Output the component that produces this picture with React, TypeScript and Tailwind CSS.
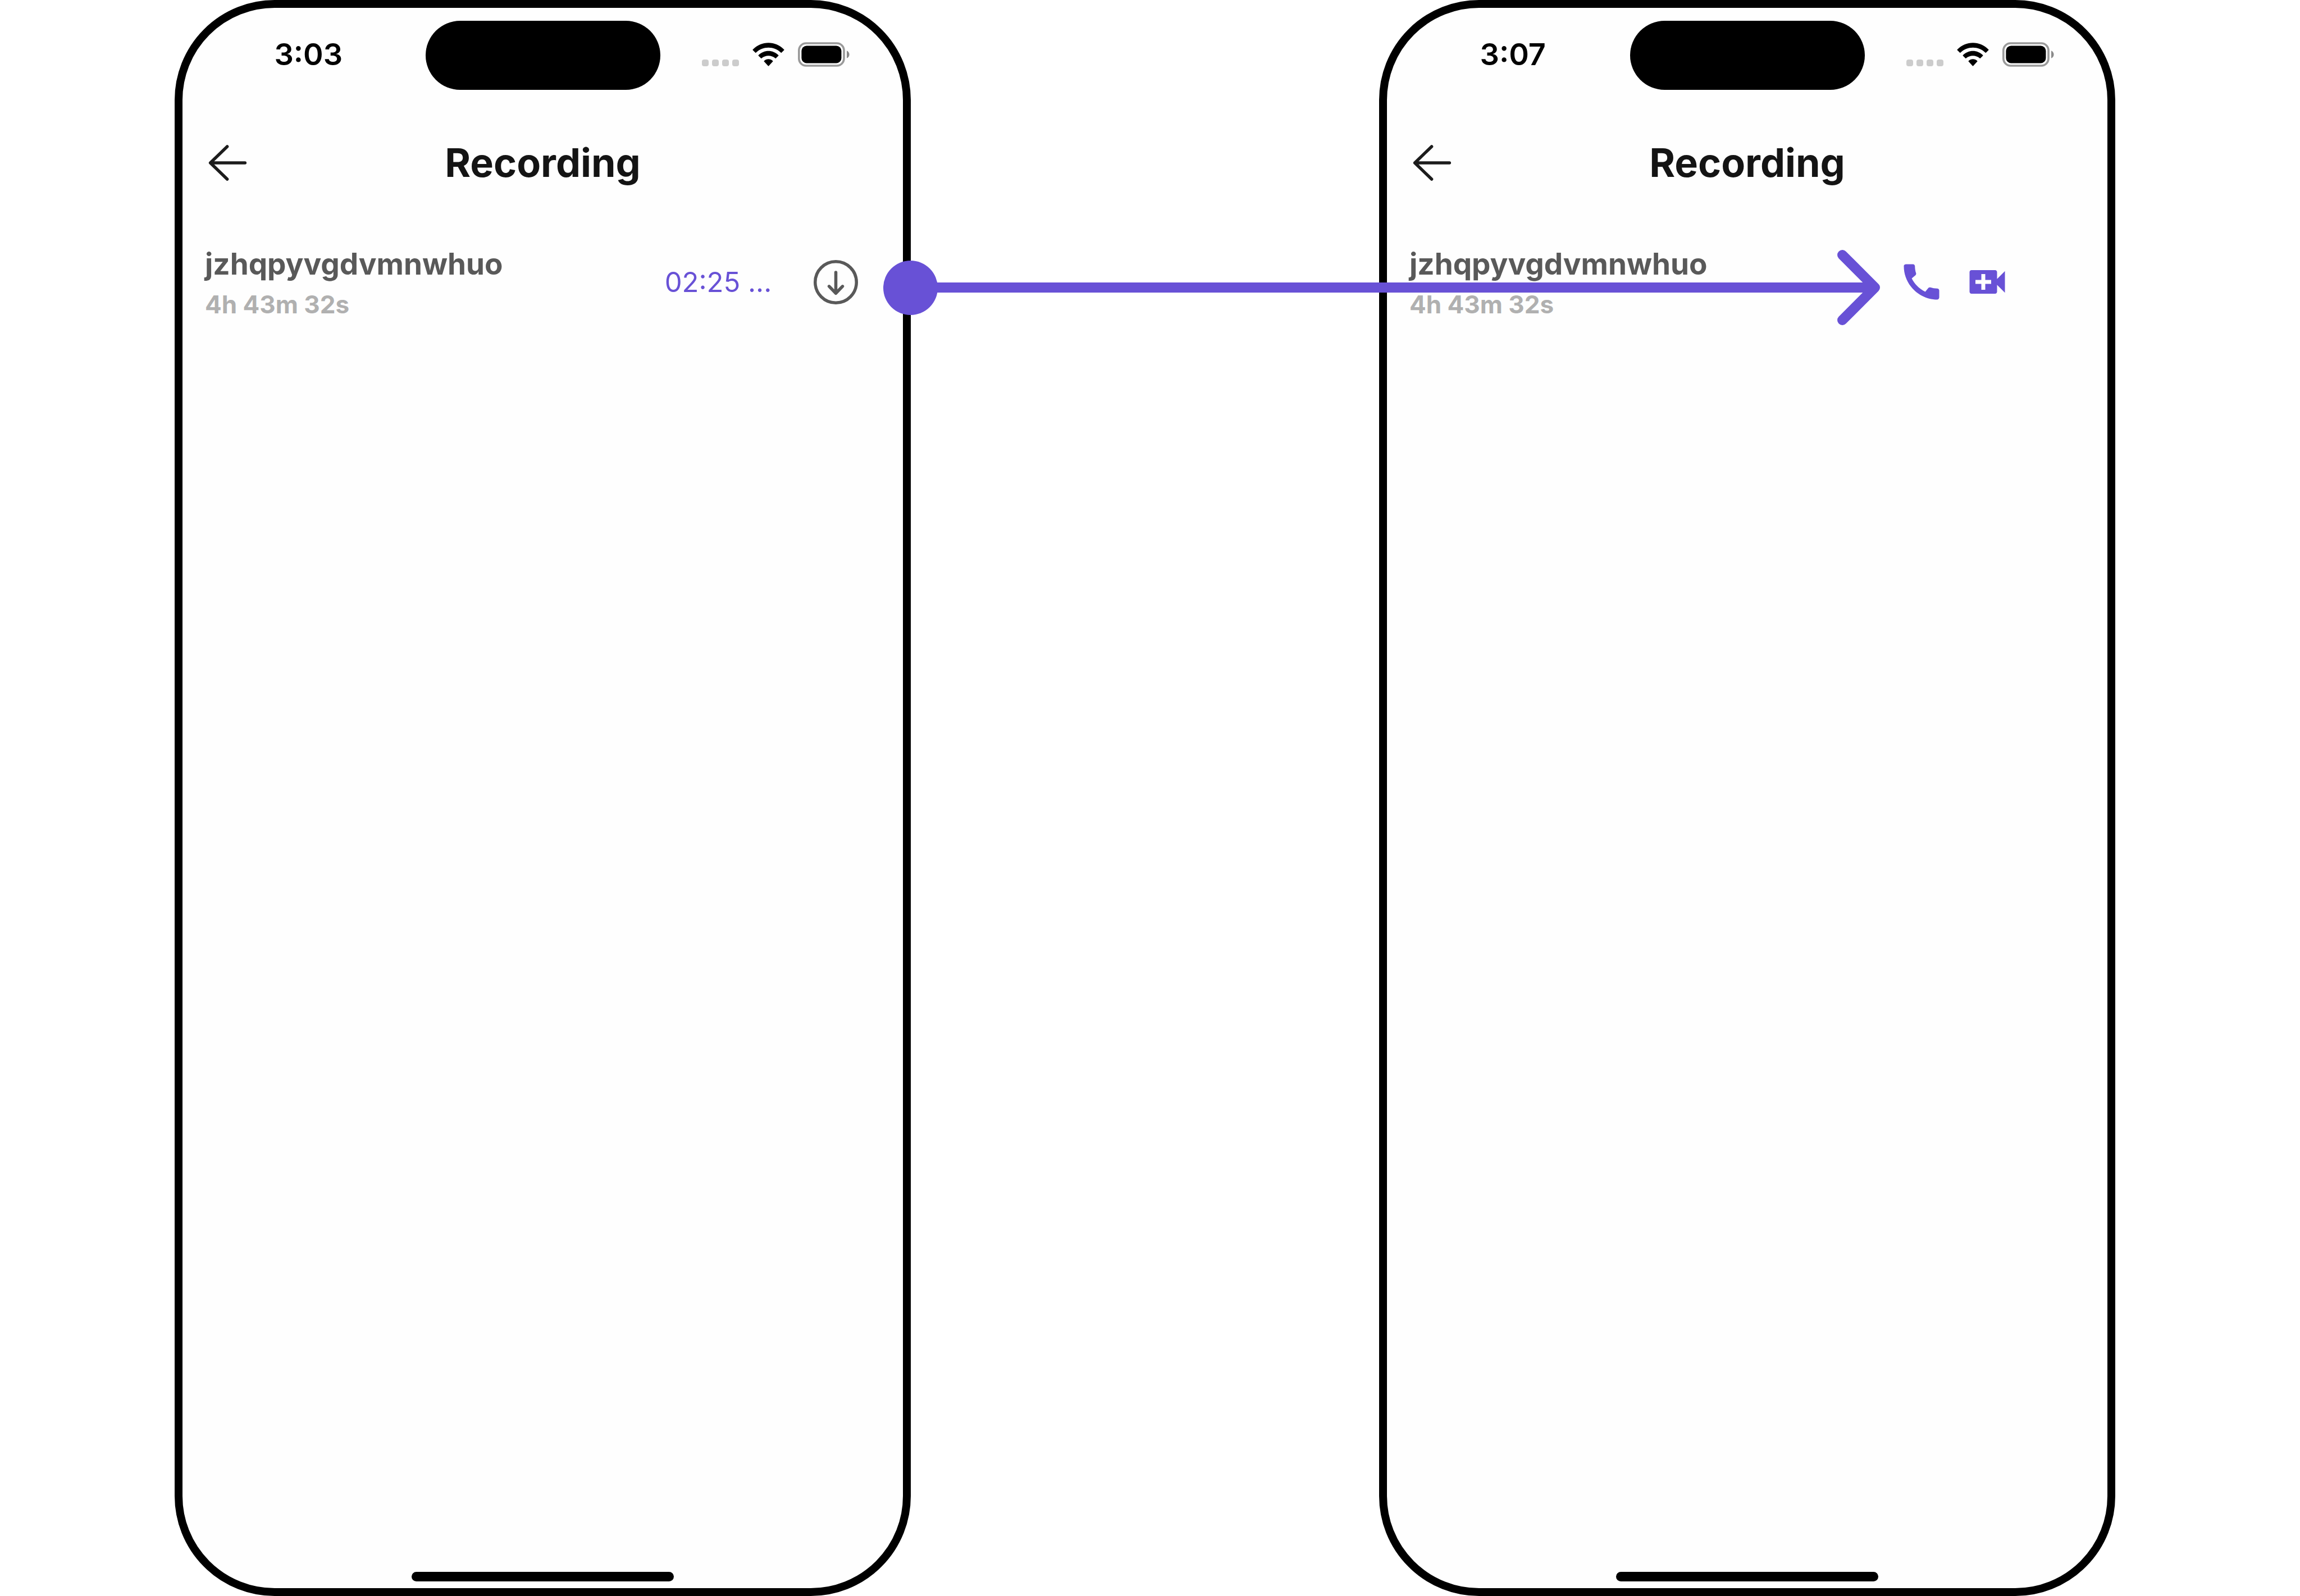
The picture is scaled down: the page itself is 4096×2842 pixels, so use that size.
import type { ReactNode } from "react";
import { MdCall, MdVideoCall } from "react-icons/md";

function Battery() {
  return (
    <svg viewBox="0 0 101 48" className="h-[44px] w-[92px]" aria-hidden="true">
      <rect x="2" y="2" width="88" height="44" rx="14" fill="none" stroke="#9a9a9a" strokeWidth="4" />
      <rect x="7" y="7" width="78" height="34" rx="10" fill="#000" />
      <path d="M95.500 16.500 C99 18 100.500 21 100.500 24 C100.500 27 99 30 95.500 31.500 Z" fill="#8a8a8a" />
    </svg>
  );
}

function Wifi() {
  return (
    <svg viewBox="0 0 62 46" className="h-[42px] w-[57px]" aria-hidden="true">
      <path d="M0.500 13.500 C17 -4 45 -4 61.500 13.500 Q62 14 61.500 14.600 L56.500 19.500 Q56 20 55.400 19.500 C42 6.300 20 6.300 6.600 19.500 Q6 20 5.500 19.500 L0.500 14.600 Q0 14 0.500 13.500 Z" />
      <path d="M11.500 24.500 C22.500 13.300 39.500 13.300 50.500 24.500 Q51 25 50.500 25.600 L45.500 30.500 Q45 31 44.400 30.500 C37 23.800 25 23.800 17.600 30.500 Q17 31 16.500 30.500 L11.500 25.600 Q11 25 11.500 24.500 Z" />
      <path d="M22.500 35.600 C27.300 31 34.700 31 39.500 35.600 Q40 36.200 39.500 36.800 L31.700 45.300 Q31 46 30.300 45.300 L22.500 36.800 Q22 36.200 22.500 35.600 Z" />
    </svg>
  );
}

function StatusBar({ time }: { time: string }) {
  return (
    <div className="grid h-[123px] grid-cols-[1fr_auto_1fr] items-center">
      <span className="pb-[4px] pl-[16px] text-center text-[54px] leading-none font-semibold text-black">{time}</span>
      <div className="h-[123px] w-[418px] rounded-full bg-black" />
      <div className="flex items-center justify-end gap-[24px] pr-[95px] pb-[4px]">
        <div className="flex h-[42px] items-end gap-[6px]">
          <i className="size-[12px] rounded-[4px] bg-[#cccccc]" />
          <i className="size-[12px] rounded-[4px] bg-[#cccccc]" />
          <i className="size-[12px] rounded-[4px] bg-[#cccccc]" />
          <i className="size-[12px] rounded-[4px] bg-[#cccccc]" />
        </div>
        <Wifi />
        <Battery />
      </div>
    </div>
  );
}

function Phone({ time, actions }: { time: string; actions: ReactNode }) {
  return (
    <section className="flex min-w-0 flex-1 flex-col rounded-[178px] border-[14px] border-black bg-[#fefefe] pt-[23px] pb-[12px]">
      <StatusBar time={time} />
      <header className="mt-[82px] grid h-[96px] grid-cols-[1fr_auto_1fr] items-center px-[46px]">
        <button type="button" aria-label="Back" className="w-[69px]">
          <svg
            viewBox="0 0 76 70"
            className="h-[64px] w-[69px]"
            fill="none"
            stroke="#1c1c1c"
            strokeWidth="6"
            strokeLinecap="round"
            strokeLinejoin="round"
            aria-hidden="true"
          >
            <path d="M72 35 H4 M37 3 L4 35 L37 67" />
          </svg>
        </button>
        <h1 className="text-[70px] leading-none font-bold text-[#141414]">Recording</h1>
      </header>
      <div className="mt-[92px] flex items-center justify-between pl-[40px]">
        <div className="min-w-0">
          <h2 className="text-[53px] leading-[80px] font-bold text-[#595959]">jzhqpyvgdvmnwhuo</h2>
          <p className="text-[44px] leading-[64px] font-bold text-[#b0b0b0]">4h 43m 32s</p>
        </div>
        {actions}
      </div>
      <div className="mx-auto mt-auto h-[17px] w-[467px] rounded-full bg-black" />
    </section>
  );
}

function DownloadActions() {
  return (
    <div className="flex items-center gap-[66px] pr-[80px]">
      <span className="w-[208px] text-center text-[49px] leading-none text-[#6851d6]">02:25 ...</span>
      <button type="button" aria-label="Download recording">
        <svg
          viewBox="0 0 86 86"
          className="size-[79px]"
          fill="none"
          stroke="#595959"
          strokeWidth="6"
          strokeLinecap="round"
          strokeLinejoin="round"
          aria-hidden="true"
        >
          <circle cx="43" cy="43" r="40" />
          <path d="M43 24 V64 M30 51 L43 64.500 L56 51" />
        </svg>
      </button>
    </div>
  );
}

function CallActions() {
  return (
    <div className="flex items-center gap-[33px] pr-[172px] text-[#6851d6]">
      <button type="button" aria-label="Voice call">
        <MdCall className="size-[84px]" />
      </button>
      <button type="button" aria-label="Video call">
        <MdVideoCall className="size-[84px]" />
      </button>
    </div>
  );
}

function Connector() {
  return (
    <div className="pointer-events-none absolute top-[445px] right-[748px] left-[1573px] flex items-center">
      <div className="size-[97px] rounded-full bg-[#6851d6]" />
      <div className="-ml-[4px] h-[18px] flex-1 bg-[#6851d6]" />
      <svg
        viewBox="0 0 76 134"
        className="h-[134px] w-[76px]"
        fill="none"
        stroke="#6851d6"
        strokeWidth="18"
        strokeLinecap="round"
        strokeLinejoin="round"
        aria-hidden="true"
      >
        <path d="M9 67 H66 M9 9 L67 67 L9 125" />
        <path d="M0 67 H40" strokeLinecap="butt" />
      </svg>
    </div>
  );
}

export default function App() {
  return (
    <main className="relative flex min-h-screen gap-[834px] bg-white pr-[329px] pl-[311px] font-['Inter',sans-serif]">
      <Phone time="3:03" actions={<DownloadActions />} />
      <Phone time="3:07" actions={<CallActions />} />
      <Connector />
    </main>
  );
}
